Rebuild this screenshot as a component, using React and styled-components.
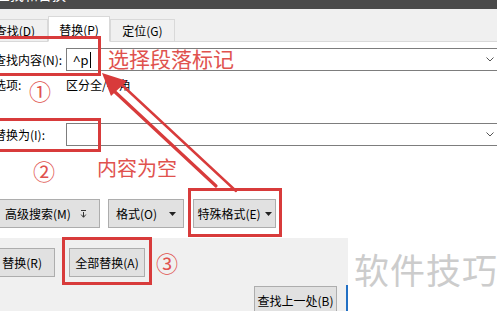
import React from 'react';
import styled, { createGlobalStyle } from 'styled-components';

const RED = '#d83b3b';
const NOTE = '#e0524e';

const GlobalStyle = createGlobalStyle`
  html, body {
    margin: 0;
    padding: 0;
    background: #ffffff;
    overflow: hidden;
  }
  body {
    font-family: "Noto Sans CJK SC", "Microsoft YaHei", sans-serif;
    font-size: 12px;
    color: #000;
  }
`;

const Page = styled.div`
  position: relative;
  width: 497px;
  height: 311px;
  overflow: hidden;
  display: flex;
  flex-direction: column;
`;

const TitleBar = styled.div`
  height: 9px;
  background: #4a4a4a;
  overflow: hidden;
  flex: none;
`;

const TitleText = styled.div`
  margin: -15px 0 0 -4px;
  font-size: 14px;
  line-height: 18px;
  color: #fff;
`;

const TabStrip = styled.div`
  height: 32px;
  flex: none;
  background: #f0f0f0;
  border-bottom: 1px solid #d9d9d9;
  display: flex;
  align-items: flex-end;
`;

const Tab = styled.div`
  box-sizing: border-box;
  width: ${p => p.$w}px;
  margin-left: ${p => p.$ml || 0}px;
  height: ${p => (p.$active ? 26 : 23)}px;
  margin-bottom: -1px;
  border: 1px solid #d9d9d9;
  border-bottom: 1px solid ${p => (p.$active ? '#fff' : '#d9d9d9')};
  background: ${p => (p.$active ? '#fff' : '#f0f0f0')};
  display: flex;
  align-items: center;
  justify-content: center;
  font-size: 12px;
`;

const Body = styled.div`
  flex: none;
  padding: 0 0 10px 0;
  display: flex;
  flex-direction: column;
`;

const FieldRow = styled.div`
  display: flex;
  align-items: center;
  height: 23px;
  margin-top: ${p => p.$top}px;
`;

const FieldLabel = styled.div`
  margin-left: -6px;
  width: 72px;
  flex: none;
  white-space: nowrap;
`;

const ComboBox = styled.div`
  flex: 1;
  box-sizing: border-box;
  height: 23px;
  margin-right: -3px;
  border: 1px solid #7d7d7d;
  border-right: none;
  display: flex;
  align-items: center;
  justify-content: space-between;
  padding: 0 6px 0 6px;
`;

const ComboValue = styled.div`
  display: flex;
  align-items: center;
  font-size: 13px;
  font-family: "Noto Sans", "Noto Sans CJK SC", sans-serif;
`;

const Caret = styled.span`
  width: 1px;
  height: 16px;
  background: #000;
  margin-left: 2px;
`;

const OptionRow = styled.div`
  display: flex;
  align-items: center;
  height: 26px;
`;

const ButtonRow = styled.div`
  display: flex;
  align-items: center;
  margin-top: 53px;
`;

const Button = styled.div`
  box-sizing: border-box;
  flex: none;
  width: ${p => p.$w}px;
  height: 29px;
  margin-left: ${p => p.$ml || 0}px;
  background: #e1e1e1;
  border: 1px solid #adadad;
  display: flex;
  align-items: center;
  justify-content: ${p => p.$justify || 'center'};
  padding: ${p => p.$pad || '0'};
  gap: ${p => p.$gap || 0}px;
  white-space: nowrap;
  font-size: 12px;
`;

const Bottom = styled.div`
  flex: 1;
  display: flex;
  min-height: 0;
`;

const GrayPanel = styled.div`
  width: 348px;
  flex: none;
  background: #f0f0f0;
  padding-top: 10px;
  display: flex;
  flex-direction: column;
  gap: 9px;
  overflow: hidden;
`;

const PanelRow = styled.div`
  display: flex;
  align-items: flex-start;
  justify-content: ${p => (p.$end ? 'flex-end' : 'flex-start')};
  gap: ${p => p.$gap || 0}px;
`;

const BlueBar = styled.div`
  width: 2px;
  height: 30px;
  margin-top: -1px;
  background: #2270c4;
`;

const Watermark = styled.div`
  flex: 1;
  padding: 9px 0 0 6px;
  font-size: 35px;
  line-height: 44px;
  color: #cccccc;
  white-space: nowrap;
  letter-spacing: 1px;
`;

/* annotation layer drawn over the dialog */
const RedBox = styled.div`
  position: absolute;
  box-sizing: border-box;
  left: ${p => p.$x}px;
  top: ${p => p.$y}px;
  width: ${p => p.$w}px;
  height: ${p => p.$h}px;
  border: 3px solid ${RED};
  pointer-events: none;
`;

const Note = styled.div`
  position: absolute;
  left: ${p => p.$x}px;
  top: ${p => p.$y}px;
  font-size: ${p => p.$size}px;
  line-height: 1;
  color: ${NOTE};
  white-space: nowrap;
  pointer-events: none;
`;

const ArrowLayer = styled.svg`
  position: absolute;
  left: 0;
  top: 0;
  pointer-events: none;
`;

const Chevron = () => (
  <svg width="8" height="5" viewBox="0 0 8 5">
    <path d="M0.5 0.5 L4 4 L7.5 0.5" fill="none" stroke="#555" strokeWidth="1" />
  </svg>
);

const DropTriangle = () => (
  <svg width="7" height="4" viewBox="0 0 7 4">
    <path d="M0 0 H7 L3.5 4 Z" fill="#222" />
  </svg>
);

const MoreIcon = () => (
  <svg width="7" height="9" viewBox="0 0 7 9">
    <path d="M1 1.5 H6" stroke="#333" strokeWidth="1" />
    <path d="M3.5 3 V8" stroke="#333" strokeWidth="1" />
    <path d="M1.2 5.6 L3.5 8.3 L5.8 5.6" fill="none" stroke="#333" strokeWidth="1" />
  </svg>
);

const Arrow = () => (
  <ArrowLayer width="497" height="311" viewBox="0 0 497 311">
    <path d="M102 73 L111 96 L127 81 Z" fill={RED} />
    <path d="M114 91 L216 186" stroke={RED} strokeWidth="3.2" strokeLinecap="round" />
    <path d="M122 85 L236 191" stroke={RED} strokeWidth="2.4" strokeLinecap="round" />
  </ArrowLayer>
);

export default function App() {
  return (
    <>
      <GlobalStyle />
      <Page>
        <TitleBar>
          <TitleText>查找和替换</TitleText>
        </TitleBar>
        <TabStrip>
          <Tab $w={66} $ml={-18}>查找(D)</Tab>
          <Tab $w={62} $active>替换(P)</Tab>
          <Tab $w={65}>定位(G)</Tab>
        </TabStrip>
        <Body>
          <FieldRow $top={6}>
            <FieldLabel>查找内容(N):</FieldLabel>
            <ComboBox>
              <ComboValue>
                ^p<Caret />
              </ComboValue>
              <Chevron />
            </ComboBox>
          </FieldRow>
          <OptionRow>
            <FieldLabel>选项:</FieldLabel>
            <span>区分全/半角</span>
          </OptionRow>
          <FieldRow $top={26}>
            <FieldLabel>替换为(I):</FieldLabel>
            <ComboBox>
              <span />
              <Chevron />
            </ComboBox>
          </FieldRow>
          <ButtonRow>
            <Button $w={108} $ml={-8} $gap={9}>
              高级搜索(M) <MoreIcon />
            </Button>
            <Button $w={76} $ml={8} $gap={12}>
              格式(O) <DropTriangle />
            </Button>
            <Button $w={83} $ml={9} $gap={4}>
              特殊格式(E) <DropTriangle />
            </Button>
          </ButtonRow>
        </Body>
        <Bottom>
          <GrayPanel>
            <PanelRow $gap={14}>
              <Button $w={76} $ml={-21} $justify="flex-end" $pad="0 12px 0 0">
                替换(R)
              </Button>
              <Button $w={76}>全部替换(A)</Button>
            </PanelRow>
            <PanelRow $end $gap={9}>
              <Button $w={83}>查找上一处(B)</Button>
              <BlueBar />
            </PanelRow>
          </GrayPanel>
          <Watermark>软件技巧</Watermark>
        </Bottom>

        <RedBox $x={-3} $y={36} $w={104} $h={40} />
        <RedBox $x={-3} $y={118} $w={104} $h={34} />
        <RedBox $x={188} $y={188} $w={94} $h={49} />
        <RedBox $x={62} $y={237} $w={90} $h={48} />
        <Arrow />
        <Note $x={108} $y={48} $size={21}>选择段落标记</Note>
        <Note $x={97} $y={158} $size={20}>内容为空</Note>
        <Note $x={29} $y={79} $size={22}>①</Note>
        <Note $x={33} $y={159} $size={22}>②</Note>
        <Note $x={156} $y={251} $size={22}>③</Note>
      </Page>
    </>
  );
}
